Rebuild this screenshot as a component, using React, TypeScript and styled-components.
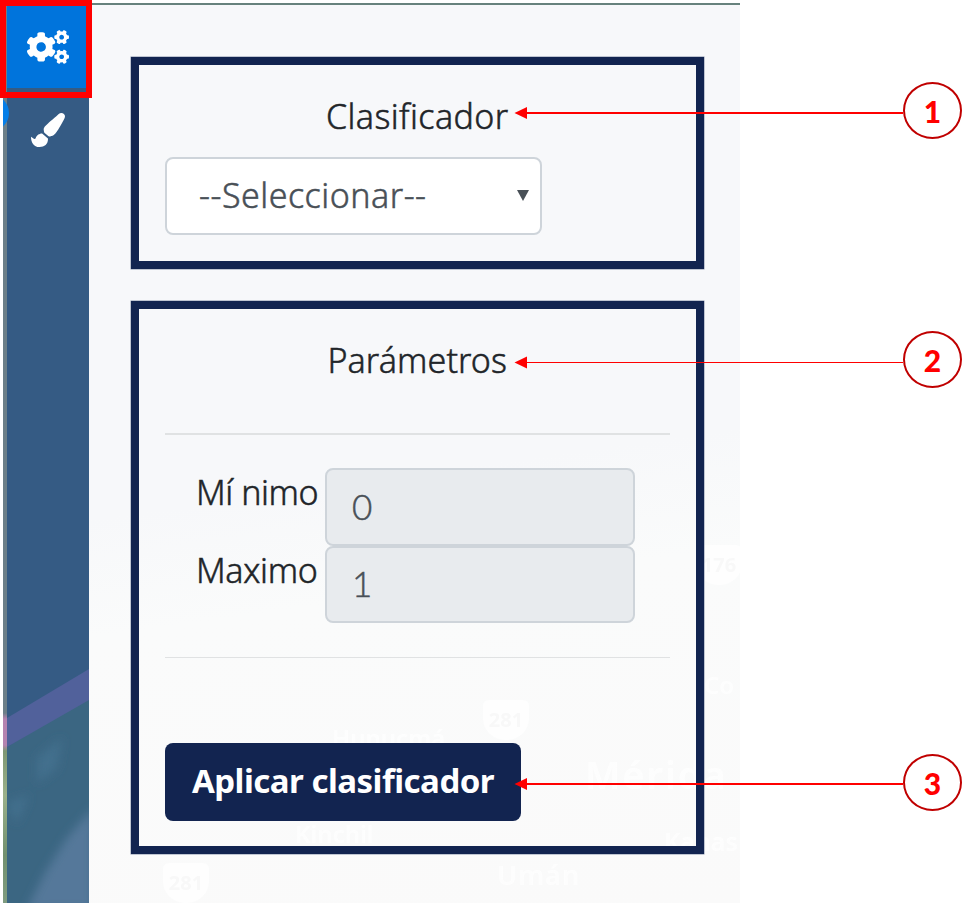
import React from 'react';
import styled, { createGlobalStyle } from 'styled-components';
import { FaCogs, FaPaintBrush } from 'react-icons/fa';

const GlobalStyle = createGlobalStyle`
  *, *::before, *::after { box-sizing: border-box; }
  body { margin: 0; background: #fff; font-family: "Noto Sans", "Open Sans", sans-serif; color: #212529; }
`;

const Page = styled.div`
  position: relative;
  width: 962px;
  height: 903px;
  overflow: hidden;
  padding: 3px 0 0 3px;
  background: #fff;
`;

const AppFrame = styled.div`
  position: relative;
  display: flex;
  width: 737px;
  height: 900px;
  overflow: hidden;
  border-top: 2px solid #67827d;
`;

const MapEdge = styled.div`
  width: 4px;
  background: linear-gradient(to bottom, #6c7f88 0, #6c7f88 708px, #b583b0 714px, #b583b0 740px, #7e9773 746px, #9bb08a 790px, #72906f 850px, #7f9c80 100%);
`;

const Sidebar = styled.nav`
  position: relative;
  width: 82px;
  overflow: hidden;
  background: #355b84;
`;

const SidebarMap = styled.svg`
  position: absolute;
  left: 0;
  bottom: 0;
`;

const MapHandle = styled.span`
  position: absolute;
  left: -30px;
  top: 90px;
  width: 36px;
  height: 36px;
  border-radius: 50%;
  background: #047ee8;
`;

const SideButton = styled.button<{ $active?: boolean }>`
  display: flex;
  align-items: center;
  justify-content: center;
  width: 82px;
  height: 83px;
  padding: 0;
  border: 0;
  color: #fff;
  background: ${(p) => (p.$active ? '#0074dc' : 'transparent')};
`;

const Content = styled.main`
  position: relative;
  display: flex;
  flex-direction: column;
  gap: 32px;
  width: 651px;
  padding: 52px 36.5px 0 42px;
  background: linear-gradient(172deg, #f7f8fa 0, #f7f8fa 52%, #fafbfb 64%, #fafafa 100%);
`;

const MapLabel = styled.span<{ $x: number; $y: number; $size: number; $wide?: number }>`
  position: absolute;
  left: ${(p) => p.$x}px;
  top: ${(p) => p.$y}px;
  font: 600 ${(p) => p.$size}px/1 "Noto Sans", sans-serif;
  letter-spacing: ${(p) => p.$wide || 0}px;
  color: #fff;
  opacity: 0.75;
  white-space: nowrap;
`;

const RoadShield = styled.span<{ $x: number; $y: number }>`
  position: absolute;
  left: ${(p) => p.$x}px;
  top: ${(p) => p.$y}px;
  width: 46px;
  height: 40px;
  padding-top: 10px;
  border-radius: 6px 6px 22px 22px;
  font: 700 20px/1 "Noto Sans", sans-serif;
  text-align: center;
  color: #f8f8f8;
  background: #fff;
  opacity: 0.8;
`;

const Panel = styled.section<{ $height: number }>`
  position: relative;
  flex: none;
  height: ${(p) => p.$height}px;
  border: 8px solid #122450;
  box-shadow: 0 0 0 0.5px #8590a8;
  padding: 0 26px;
`;

const Title = styled.h2<{ $spacing: number }>`
  margin: 27px 0 0;
  height: 48px;
  font-size: 34px;
  line-height: 48px;
  font-weight: 300;
  -webkit-text-stroke: 0.5px currentColor;
  letter-spacing: ${(p) => p.$spacing}px;
  text-align: center;
`;

const SelectBox = styled.div`
  display: flex;
  align-items: center;
  justify-content: space-between;
  width: 377px;
  height: 78px;
  margin-top: 17px;
  padding: 0 11px 2px 32px;
  border: 2px solid #ced4da;
  border-radius: 8px;
  background: #fff;
  color: #495057;
  font-size: 34px;
  font-weight: 300;
  -webkit-text-stroke: 0.5px currentColor;
  letter-spacing: 0.5px;
`;

const Rule = styled.hr<{ $top: number; $thin?: boolean }>`
  margin: ${(p) => p.$top}px 0 0;
  border: 0;
  height: ${(p) => (p.$thin ? 1 : 2)}px;
  background: #e0e2e3;
`;

const Fields = styled.div`
  display: flex;
  flex-direction: column;
  margin: 33px 34px 0 31px;
`;

const Field = styled.label`
  display: grid;
  grid-template-columns: 129px 310px;
  height: 77.5px;
  font-size: 34px;
  font-weight: 300;
  -webkit-text-stroke: 0.5px currentColor;
`;

const FieldName = styled.span<{ $spacing: number }>`
  line-height: 48px;
  letter-spacing: ${(p) => p.$spacing}px;
  white-space: nowrap;
`;

const FieldValue = styled.span`
  display: flex;
  align-items: center;
  height: 77.5px;
  padding: 0 0 2px 25px;
  border: 2px solid #ced4da;
  border-radius: 8px;
  background: #e8ebee;
  color: #495057;
  font-family: "Lato", sans-serif;
  font-size: 35px;
`;

const ApplyButton = styled.button`
  display: block;
  width: 356px;
  height: 78px;
  margin-top: 85px;
  padding: 0 0 3px;
  border: 0;
  border-radius: 8px;
  background: #122450;
  color: #fff;
  font-family: inherit;
  font-size: 33px;
  font-weight: 700;
  letter-spacing: -0.5px;
  white-space: nowrap;
`;

const Highlight = styled.div`
  position: absolute;
  left: 0;
  top: 0;
  width: 92px;
  height: 98px;
  border: 6px solid #f00;
`;

const Callout = styled.div<{ $top: number }>`
  position: absolute;
  left: 514px;
  top: ${(p) => p.$top}px;
  display: flex;
  width: 448px;
`;

const Arrow = styled.svg`
  flex: none;
`;

const Badge = styled.span`
  display: flex;
  align-items: center;
  justify-content: center;
  width: 59px;
  height: 57px;
  border: 2px solid #c00000;
  border-radius: 50%;
  background: #fff;
  color: #f00;
  font: 900 30px/1 "Lato", sans-serif;
`;

const callouts = [
  { n: 1, top: 82, line: 31, stroke: 2 },
  { n: 2, top: 331, line: 31.5, stroke: 1 },
  { n: 3, top: 754, line: 30, stroke: 2 },
];

export default function App() {
  return (
    <>
      <GlobalStyle />
      <Page>
        <AppFrame>
          <MapEdge />
          <Sidebar>
            <SidebarMap width="82" height="250" viewBox="0 0 82 250">
              <defs>
                <filter id="soft"><feGaussianBlur stdDeviation="5" /></filter>
              </defs>
              <path d="M0 94 L82 45 V250 H0Z" fill="#3b6682" />
              <g filter="url(#soft)">
                <path d="M86 155 L60 185 L38 220 L20 256 H86Z" fill="#55789a" />
                <path d="M30 105 L55 85 L50 115 L30 130Z M0 150 L22 142 L10 170Z" fill="#436f8d" />
              </g>
              <path d="M0 65 L82 16 V47 L0 94Z" fill="#51619b" />
            </SidebarMap>
            <SideButton $active><FaCogs size={42} /></SideButton>
            <SideButton><FaPaintBrush size={34} /></SideButton>
          </Sidebar>
          <MapHandle />
          <Content>
            <MapLabel $x={243} $y={721} $size={24}>Hunucmá</MapLabel>
            <MapLabel $x={206} $y={817} $size={24}>Kinchil</MapLabel>
            <MapLabel $x={408} $y={856} $size={27} $wide={1}>Umán</MapLabel>
            <MapLabel $x={496} $y={750} $size={38} $wide={2}>Mérida</MapLabel>
            <MapLabel $x={575} $y={824} $size={25}>Kanas</MapLabel>
            <MapLabel $x={615} $y={668} $size={24}>Co</MapLabel>
            <RoadShield $x={394} $y={695}>281</RoadShield>
            <RoadShield $x={74} $y={858}>281</RoadShield>
            <RoadShield $x={607} $y={540}>176</RoadShield>
            <Panel $height={212}>
              <Title $spacing={0.4}>Clasificador</Title>
              <SelectBox>
                --Seleccionar--
                <svg width="12" height="11" viewBox="0 0 12 11"><path d="M0 0H12L6 11Z" fill="#495057" /></svg>
              </SelectBox>
            </Panel>
            <Panel $height={553}>
              <Title $spacing={0.1}>Parámetros</Title>
              <Rule $top={49} />
              <Fields>
                <Field><FieldName $spacing={-0.4}>Mí nimo</FieldName><FieldValue>0</FieldValue></Field>
                <Field><FieldName $spacing={-0.3}>Maximo</FieldName><FieldValue>1</FieldValue></Field>
              </Fields>
              <Rule $top={34} $thin />
              <ApplyButton>Aplicar clasificador</ApplyButton>
            </Panel>
          </Content>
        </AppFrame>
        <Highlight />
        {callouts.map((c) => (
          <Callout key={c.n} $top={c.top}>
            <Arrow width="389" height="57" viewBox="0 0 389 57">
              <path d={`M10 ${c.line}H389`} stroke="#f00" strokeWidth={c.stroke} />
              <path d={`M0.5 ${c.line}L13 ${c.line - 6}V${c.line + 6}Z`} fill="#f00" />
            </Arrow>
            <Badge>{c.n}</Badge>
          </Callout>
        ))}
      </Page>
    </>
  );
}
